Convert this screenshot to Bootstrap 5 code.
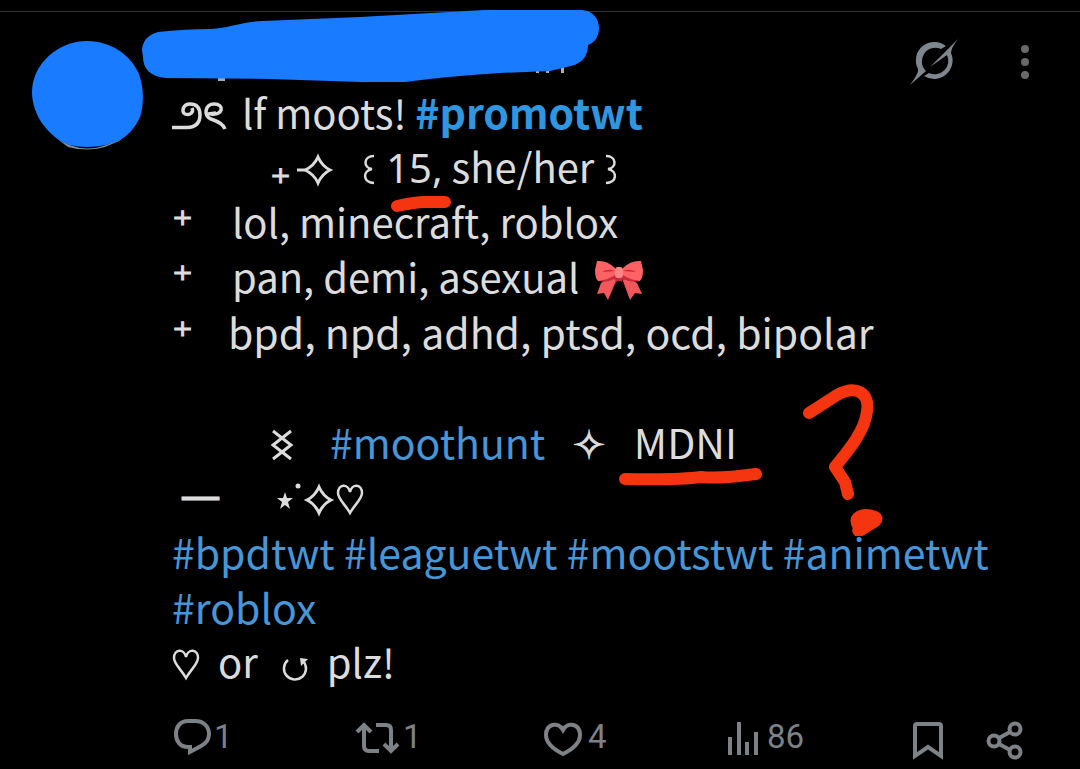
<!DOCTYPE html>
<html lang="en">
<head>
<meta charset="utf-8">
<meta name="viewport" content="width=device-width, initial-scale=1">
<title>Post</title>
<link href="https://cdn.jsdelivr.net/npm/bootstrap@5.3.0/dist/css/bootstrap.min.css" rel="stylesheet">
<style>
  body { background:#000; color:#dcdcdc; font-family:"Noto Sans CJK SC","Noto Sans",sans-serif; overflow-x:hidden; }
  a, a:hover { color:#4796d8; text-decoration:none; }
  .post { margin-top:11px; border-top:1px solid #303234; padding:0 51px 0 32px; }
  .avatar { width:111px; height:111px; margin:28px 29px 0 0; }
  .avatar svg, .scribble, .ink { display:block; overflow:visible; }
  .post-body { min-width:0; }
  .post-head { height:72px; padding-top:26px; }
  .scribble { position:absolute; left:-32px; top:-4px; }
  .head-tools { gap:63px; }
  .icon-btn { background:none; border:0; padding:0; color:#7d8287; display:inline-flex; align-items:center; }
  .icon-btn svg { display:block; overflow:visible; }
  .post-text { font-size:40px; line-height:55px; }
  .line { display:flex; align-items:baseline; height:55px; white-space:pre; }
  .line svg { flex:none; align-self:flex-start; display:block; }
  .digits { font-family:"Noto Sans",sans-serif; }
  .sym { font-family:"DejaVu Sans",sans-serif; flex:none; -webkit-text-stroke:1px #dcdcdc; }
  .bullet { width:60px; }
  .bullet-short { width:56px; }
  .wide { font-size:41px; }
  .tag-bold { font-weight:700; color:#2f97e0; }
  .ink { position:absolute; fill:none; stroke:#f5350f; stroke-width:12; stroke-linecap:round; stroke-linejoin:round; }
  .actions { height:50px; margin-top:27px; padding-right:6px; font:33px/50px Roboto,sans-serif; }
  .actions .icon-btn { gap:4px; }
  .metric { flex:1 1 0; }
  .end-tools { gap:42px; }
</style>
</head>
<body>
<article class="post d-flex align-items-start">
  <div class="avatar flex-shrink-0">
    <svg width="111" height="111" viewBox="0 0 111 111" role="img" aria-label="Profile picture"><path d="M20 95Q55 122 93 95L87 101 73 107Q55 112 36 107Z" fill="#858b94"/><path d="M55 1C80 1 99 16 107 34 112 48 112 65 108 77 103 88 96 96 86 101L74 105Q55 109 37 105C17 97 0 76 0 52 0 24 26 1 55 1Z" fill="#197bff"/></svg>
  </div>
  <div class="post-body flex-grow-1 position-relative">
    <header class="post-head position-relative d-flex justify-content-end align-items-start">
      <svg class="scribble" width="460" height="76" viewBox="140 8 460 76" aria-hidden="true"><path d="M218 78h7v3h-7zM536 69h3v4h-3zM546 69h3v4h-3zM561 67h3v6h-3z" fill="#a9adb2"/><path d="M158 32Q185 29 210 29C230 28 240 22 262 21L360 17 485 10H582C594 11 599 20 599 28 599 37 594 43 588 45 588 55 583 63 571 66L550 71 500 73Q450 76 405 82L360 82 270 79 166 78C151 77 143 69 143 57L142 50Q143 36 158 32Z" fill="#197bff"/></svg>
      <div class="head-tools d-flex">
        <button class="icon-btn" type="button" aria-label="Explain this post"><svg width="48" height="48" viewBox="0 0 48 48" fill="#7e868e"><path d="M36 8A18.500 18.500 0 0 0 8 31Q9 35 0 47L16 33A13.500 13.500 0 0 1 31 11Z"/><path d="M48 1L20 29 37 17A13.500 13.500 0 0 1 19 35L14 38A18.500 18.500 0 0 0 41 15Q41 10 48 1Z"/></svg></button>
        <button class="icon-btn" type="button" aria-label="More"><svg width="8" height="48" viewBox="0 0 8 48" fill="#68696b"><circle cx="4" cy="11" r="4"/><circle cx="4" cy="24" r="4"/><circle cx="4" cy="37" r="4"/></svg></button>
      </div>
    </header>

    <div class="post-text">
      <div class="line"><svg width="70" height="55" viewBox="0 0 70 55" fill="none" stroke="#dcdcdc" stroke-width="3.500" role="img" aria-label="ribbon ornament"><path d="M0 43.500H15Q28 43 28 31C28 23 24 20 18 20 11 20 9 28 13 30 18 32 22 28 20 24"/><path d="M39 30C51 32 53 20 42 20 33 20 31 32 39 35Q51 39 53 45M36 30 44 29"/></svg><span>lf moots! </span><a class="tag-bold wide" href="#promotwt">#promotwt</a></div>
      <div class="line"><span class="sym" style="margin-left:98px">₊</span><svg width="71" height="55" viewBox="0 0 71 55" fill="none" stroke="#dcdcdc" stroke-width="3" aria-hidden="true"><path d="M6 31H15M27 18Q31 27 39 31 31 35 27 44 23 35 14 31 23 27 27 18Z"/></svg><svg width="24" height="55" viewBox="0 0 24 55" fill="none" stroke="#dcdcdc" stroke-width="2.500" aria-hidden="true"><path d="M12 17C1 17 1 29 10 30 0 32 1 44 12 44"/></svg><span class="digits position-relative">15,<svg class="ink" width="60" height="14" viewBox="0 0 60 14" style="left:5px;top:57px"><path d="M6 9Q25 5 34 5H54"/></svg></span><span> she/her</span><svg width="30" height="55" viewBox="0 0 30 55" fill="none" stroke="#dcdcdc" stroke-width="2.500" aria-hidden="true"><path d="M12 17C23 17 23 29 14 30 24 32 23 44 12 44"/></svg></div>
      <div class="line"><span class="sym bullet">⁺</span><span>lol, minecraft, roblox</span></div>
      <div class="line"><span class="sym bullet">⁺</span><span>pan, demi, asexual</span><svg width="70" height="55" viewBox="-5 0 70 55" role="img" aria-label="ribbon"><path d="M30 26L17 34 13 45 20 44 24 51 32 32ZM40 26L53 34 58 45 51 44 46 51 39 32Z" fill="#f2575c"/><path d="M13 12Q23 11 31 19L31 27Q25 32 14 32 11 29 11 21ZM57 12Q47 11 39 19L39 27Q45 32 56 32 59 29 59 21Z" fill="#ff6264"/><path d="M14 32Q24 31 31 26L35 29 39 26Q46 31 56 32 47 34 39 30L38 33 42 40 37 32H33L28 40 32 32 30 30Q23 34 14 32ZM31 22L18 23Q24 19 31 22ZM39 22L52 23Q46 19 39 22Z" fill="#c92a3d"/><rect x="31" y="18" width="8" height="11" rx="3" fill="#ff8582"/></svg></div>
      <div class="line"><span class="sym bullet-short">⁺</span><span class="wide">bpd, npd, adhd, ptsd, ocd, bipolar</span></div>
      <div class="line"></div>
      <div class="line"><svg width="158" height="55" viewBox="0 0 158 55" fill="none" stroke="#dcdcdc" stroke-width="3" aria-hidden="true"><path d="M101 16L119 32 101 45M119 16L101 32 119 45" stroke="none"/><path d="M101 17L119 31 110 38 101 31 119 17M101 45L110 38 119 45"/></svg><a class="wide" href="#moothunt">#moothunt</a><span class="sym" style="margin-left:27px;margin-right:28px">✧</span><span class="wide position-relative">MDNI<svg class="ink" width="270" height="160" viewBox="0 0 270 160" style="left:-20px;top:-34px"><path d="M11 99Q65 100 87 97 105 99 142 94M195 33L223 15C243 4 256 14 253 31 251 52 232 73 221 87L231 102 234 114"/><path d="M242 154Q239 151 241 148 236 140 241 135 249 128 262 133 270 137 264 144L248 154Z" fill="#f5350f" stroke-width="4"/></svg></span></div>
      <div class="line"><span class="sym wide" style="margin-left:8px">—</span><svg width="115" height="55" viewBox="3 0 115 55" aria-hidden="true"><path d="M67 23L69 29H75L70 33 72 40 67 36 62 40 64 33 59 29H65Z" fill="#dcdcdc"/><circle cx="80" cy="17" r="2.500" fill="#dcdcdc"/><path d="M101 18Q105 27 113 31 105 35 101 44 97 35 89 31 97 27 101 18Z" fill="none" stroke="#dcdcdc" stroke-width="3"/></svg><svg width="28" height="55" viewBox="0 0 28 55" fill="none" stroke="#dcdcdc" stroke-width="2.500" role="img" aria-label="heart"><path d="M14 23C12 14 2 15 2 24 2 30 9 35 14 44 19 35 26 30 26 24 26 15 16 14 14 23Z"/></svg></div>
      <div class="wide"><a href="#bpdtwt">#bpdtwt</a> <a href="#leaguetwt">#leaguetwt</a> <a href="#mootstwt">#mootstwt</a> <a href="#animetwt">#animetwt</a> <a href="#roblox">#roblox</a></div>
      <div class="line"><svg width="28" height="55" viewBox="0 0 28 55" fill="none" stroke="#dcdcdc" stroke-width="2.500" role="img" aria-label="heart"><path d="M14 23C12 14 2 15 2 24 2 30 9 35 14 44 19 35 26 30 26 24 26 15 16 14 14 23Z"/></svg><span style="margin-left:18px">or</span><svg width="69" height="55" viewBox="0 0 69 55" fill="none" stroke="#dcdcdc" stroke-width="2.500" role="img" aria-label="repost"><path d="M30 26A11 11 0 1 0 45 27"/><path d="M42 24L50 25 43 32Z" fill="#dcdcdc" stroke="none"/></svg><span>plz!</span></div>
    </div>

    <footer class="actions d-flex align-items-center">
      <div class="metric"><button class="icon-btn" type="button" aria-label="1 reply"><svg width="38" height="38" viewBox="0 0 38 38" fill="none" stroke="currentColor" stroke-width="4"><path d="M16 3H23C32 3 37 9 37 16 37 22 33 26 29 28L18 34V29H16C8 29 4 23 4 16 4 9 8 3 16 3Z"/></svg>1</button></div>
      <div class="metric"><button class="icon-btn" type="button" aria-label="1 repost"><svg width="42" height="38" viewBox="2 0 42 38" fill="none" stroke="currentColor" stroke-width="4"><path d="M2 14L9 7 16 14M9 7V28Q9 33 14 33H24M21 7H31Q36 7 36 12V32M29 26L36 33 43 26"/></svg>1</button></div>
      <div class="metric"><button class="icon-btn" type="button" aria-label="4 likes"><svg width="42" height="38" viewBox="-1 0 42 38" fill="none" stroke="currentColor" stroke-width="4"><path d="M20 12C15 3 3 6 3 17 3 25 12 32 20 36 28 32 37 25 37 17 37 6 25 3 20 12Z"/></svg>4</button></div>
      <div class="metric"><button class="icon-btn" type="button" aria-label="86 views"><svg width="36" height="38" viewBox="0 0 36 38" fill="currentColor"><path d="M1 19h4v18h-4zM10 4h4v33h-4zM18 24h4v13h-4zM27 14h4v23h-4z"/></svg>86</button></div>
      <div class="end-tools d-flex">
        <button class="icon-btn" type="button" aria-label="Bookmark"><svg width="32" height="40" viewBox="0 0 32 40" fill="none" stroke="currentColor" stroke-width="4"><path d="M3 35V5Q3 3 5 3H27Q29 3 29 5V35L16 26Z"/></svg></button>
        <button class="icon-btn" type="button" aria-label="Share"><svg width="37" height="40" viewBox="0 0 37 40" fill="none" stroke="currentColor" stroke-width="4"><circle cx="8" cy="20" r="5.500"/><circle cx="29" cy="8" r="5.500"/><circle cx="29" cy="31" r="5.500"/><path d="M13 17L24 11M13 23L24 29"/></svg></button>
      </div>
    </footer>
  </div>
</article>
<script src="https://cdn.jsdelivr.net/npm/bootstrap@5.3.0/dist/js/bootstrap.bundle.min.js"></script>
</body>
</html>
